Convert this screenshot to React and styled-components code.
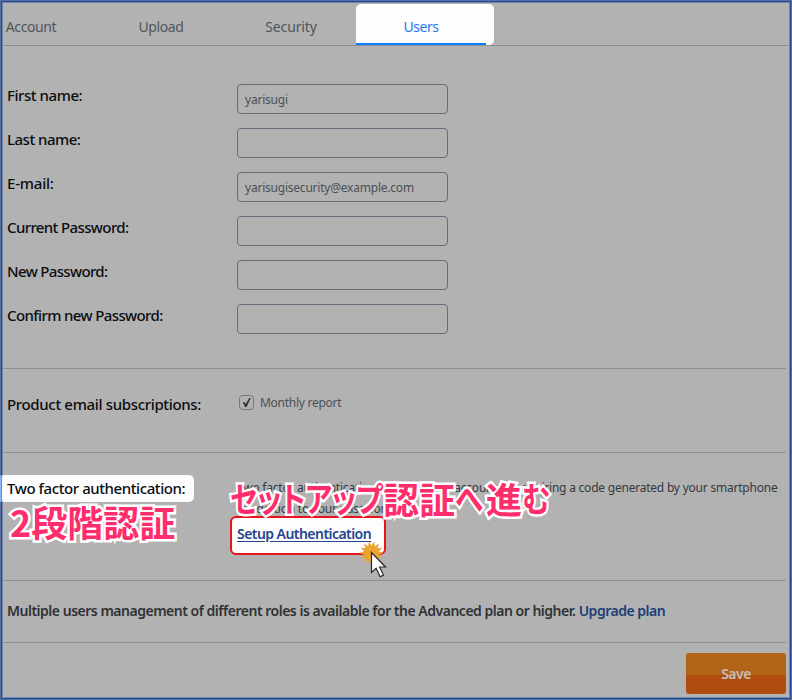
import React from 'react';
import styled, { createGlobalStyle } from 'styled-components'

const GlobalStyle = createGlobalStyle`
  * { box-sizing: border-box; }
  body {
    margin: 0;
    background: #b2b2b2;
    font-family: "Noto Sans", "Open Sans", "Noto Sans CJK JP", sans-serif;
  }
`
const Page = styled.div`
  position: relative;
  width: 792px;
  height: 700px;
  overflow: hidden;
  background: #b2b2b2;
  color: #3b3e42;
`
const Frame = styled.div`
  position: absolute;
  inset: 0;
  pointer-events: none;
  border: 1px solid #5a6f98;
  box-shadow: inset 0 0 0 1px #24499a, inset 0 0 0 2px #6d86b6;
`
const Tabs = styled.nav`
  display: flex;
  height: 46px;
  margin-left: -34px;
  border-bottom: 1px solid #8e8f91;
`
const Tab = styled.a`
  display: flex;
  align-items: center;
  justify-content: center;
  width: 130px;
  height: 45px;
  padding-top: 8px;
  font-size: 14px;
  letter-spacing: ${p => p.$track || 0}px;
  color: #50555b;
`
const ActiveTab = styled(Tab)`
  width: 138px;
  height: 41px;
  margin-top: 4px;
  padding: 4px 8px 0 0;
  border-radius: 5px 5px 5px 0;
  color: #1c7cf2;
  background: linear-gradient(#0a7cfa, #0a7cfa) left bottom / 130px 2px no-repeat #fdfdfd;
`
const Form = styled.form`
  display: flex;
  flex-direction: column;
  width: 786px;
`
const Fields = styled.div`
  height: 323px;
  padding-top: 38px;
  border-bottom: 1px solid #8e909a;
`
const Field = styled.label`
  display: flex;
  height: 44px;
  padding-left: 7px;
`
const Label = styled.span`
  width: 230px;
  flex: none;
  font-size: 15px;
  font-weight: 500;
  line-height: 22px;
  letter-spacing: ${p => p.$track || 0}px;
  white-space: nowrap;
  color: #0b0d10;
`
const Input = styled.input`
  width: 211px;
  height: 30px;
  padding: 0 7px;
  border: 1px solid #656e7a;
  border-radius: 4px;
  outline: none;
  background: transparent;
  font-family: inherit;
  font-size: 12px;
  letter-spacing: -0.22px;
  color: #4c5056;
`
const Section = styled.section`
  display: flex;
  height: ${p => p.$height}px;
  padding: ${p => p.$pad}px 0 0 7px;
  border-bottom: 1px solid #8e909a;
`
const Check = styled.span`
  display: flex;
  align-items: center;
  height: 18px;
  margin-left: 2px;
  gap: 6px;
  font-size: 12px;
  letter-spacing: -0.27px;
  color: #4c5056;
`
const Info = styled.div`
  font-size: 12px;
  line-height: 21px;
  letter-spacing: -0.22px;
  color: #35393e;
  white-space: nowrap;
`
const Plan = styled.p`
  margin: 0;
  font-size: 14px;
  font-weight: 600;
  line-height: 24px;
  letter-spacing: -0.49px;
  white-space: nowrap;
  color: #303235;
`
const PlanLink = styled.a`
  color: #1d3f78;
`
const Save = styled.button`
  align-self: flex-end;
  width: 100px;
  height: 41px;
  margin-top: 10px;
  padding: 0 0 1px;
  border: 0;
  border-radius: 3px;
  background: linear-gradient(#b16318 22px, #b04d0e 22px);
  font-family: inherit;
  font-size: 14px;
  font-weight: 600;
  letter-spacing: -0.5px;
  color: #c6beb8;
`
const Spot = styled.div`
  position: absolute;
  left: 0;
  top: 475px;
  width: 194px;
  height: 27px;
  padding: 2px 0 0 7px;
  border-radius: 2px 5px 5px 2px;
  box-shadow: inset 1px 0 #84b9ff, inset 2px 0 #4592f8;
  background: #fdfdfd;
`
const SetupLink = styled.a`
  position: absolute;
  left: 230px;
  top: 516px;
  width: 156px;
  height: 39px;
  padding: 4px 0 0 5px;
  border: 2px solid #e8131b;
  border-radius: 6px;
  background: #fdfdfd;
  font-size: 14px;
  font-weight: 600;
  line-height: 24px;
  letter-spacing: -0.55px;
  white-space: nowrap;
  text-decoration: underline;
  text-underline-offset: 2px;
  color: #23458e;
`
const Note = styled.div`
  position: absolute;
  display: flex;
  left: ${p => p.$x}px;
  top: ${p => p.$y}px;
  font-family: "Noto Sans CJK JP", sans-serif;
  font-size: 36px;
  font-weight: 700;
  line-height: 48px;
  font-feature-settings: "palt";
  white-space: nowrap;
  color: #ff2d6c;
  -webkit-text-stroke: 5px #fff;
  paint-order: stroke fill;
`
// narrow kana, the box is as wide as the squeezed glyphs
const Kana = styled.span`
  width: ${p => p.$width}px;
  font-size: 34px;
  transform: scaleX(0.84);
  transform-origin: left;
`
const Pointer = styled.svg`
  position: absolute;
  left: 356px;
  top: 538px;
`

const fields = [
  { label: 'First name:', value: 'yarisugi', track: -0.45 },
  { label: 'Last name:', value: '', track: -0.5 },
  { label: 'E-mail:', value: 'yarisugisecurity@example.com', track: -0.2 },
  { label: 'Current Password:', value: '', track: -0.62 },
  { label: 'New Password:', value: '', track: -0.66 },
  { label: 'Confirm new Password:', value: '', track: -0.62 },
]

const burst = Array.from({ length: 28 }, (_, i) => {
  const r = i % 2 ? 7.5 : 12
  const a = (i * Math.PI) / 14
  return `${15.5 + r * Math.cos(a)},${15 + r * Math.sin(a)}`
}).join(' ')

const App = () => (
  <>
    <GlobalStyle />
    <Page>
      <Tabs>
        <Tab $track={-0.4}>Account</Tab>
        <Tab $track={-0.4}>Upload</Tab>
        <Tab $track={-0.15}>Security</Tab>
        <ActiveTab $track={-0.5}>Users</ActiveTab>
      </Tabs>
      <Form>
        <Fields>
          {fields.map(f => (
            <Field key={f.label}>
              <Label $track={f.track}>{f.label}</Label>
              <Input defaultValue={f.value} />
            </Field>
          ))}
        </Fields>
        <Section $height={84} $pad={24}>
          <Label $track={-0.34}>Product email subscriptions:</Label>
          <Check>
            <svg width="15" height="15" viewBox="0 0 15 15">
              <rect x=".5" y=".5" width="14" height="14" rx="3" fill="none" stroke="#747679" />
              <path d="M3.8 7.6l1.7-.5 1.2 1.9L10.2 3l1.6 0L7.6 12H6z" fill="#33373c" />
            </svg>
            Monthly report
          </Check>
        </Section>
        <Section $height={128} $pad={24}>
          <Label />
          <Info>
            <div>Two factor authentication protects your account by requiring a code generated by your smartphone</div>
            <div>in addition to your password</div>
          </Info>
        </Section>
        <Section $height={62} $pad={18}>
          <Plan>
            Multiple users management of different roles is available for the Advanced plan or higher. <PlanLink>Upgrade plan</PlanLink>
          </Plan>
        </Section>
        <Save type="button">Save</Save>
      </Form>
      <Frame />
      <Spot>
        <Label $track={-0.42}>Two factor authentication:</Label>
      </Spot>
      <SetupLink>Setup Authentication</SetupLink>
      <Note $x={10} $y={497}>2段階認証</Note>
      <Note $x={230} $y={474}>
        <Kana $width={153}>セットアップ</Kana>
        認証
        <Kana $width={31}>へ</Kana>
        進
        <Kana $width={30}>む</Kana>
      </Note>
      <Pointer width="32" height="44" viewBox="0 0 32 44">
        <polygon points={burst} fill="#eba52e" />
        <path d="M15.5 14.5v20l4.6-4.2 4 8.4 3.4-1.6-3.9-8.1h5.9z" fill="#fff" stroke="#26262c" strokeWidth="1.2" />
      </Pointer>
    </Page>
  </>
)

export default App;
